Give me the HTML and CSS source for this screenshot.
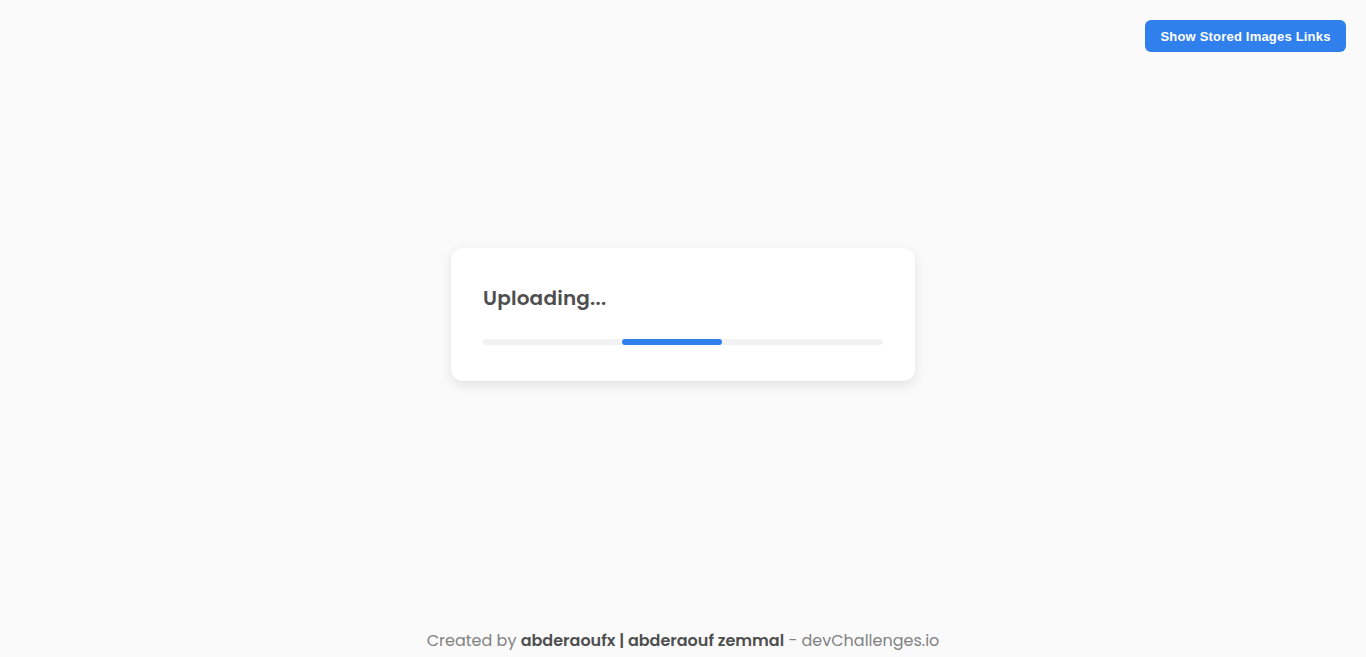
FILE: index.html
```html
<!DOCTYPE html>
<html lang="en">
<head>
<meta charset="utf-8">
<title>Image Uploader</title>
<link rel="stylesheet" href="styles.css">
</head>
<body>
<header class="topbar">
  <button class="links-btn" type="button">Show Stored Images Links</button>
</header>
<main class="main">
  <section class="card">
    <h1 class="card-title">Uploading...</h1>
    <div class="track"><div class="bar"></div></div>
  </section>
</main>
<footer class="footer">
  <p class="credit">Created by <strong>abderaoufx | abderaouf zemmal</strong> - devChallenges.io</p>
</footer>
</body>
</html>
```

FILE: styles.css
```css
* { box-sizing: border-box; }
html, body { height: 100%; }
body {
  margin: 0;
  background: #fafafa;
  font-family: "Poppins", "Open Sans", "Noto Sans", sans-serif;
  display: flex;
  flex-direction: column;
  min-height: 100vh;
}
.topbar {
  display: flex;
  justify-content: flex-end;
  padding: 20px 20px 0;
  height: 52px;
}
.links-btn {
  height: 32px;
  width: 201px;
  border: none;
  border-radius: 6px;
  background: #2f80ed;
  color: #fff;
  font-family: "Liberation Sans", Arial, sans-serif;
  font-weight: 700;
  font-size: 13px;
  letter-spacing: 0.2px;
  padding: 0;
  cursor: pointer;
}
.main {
  flex: 1;
  display: flex;
  align-items: center;
  justify-content: center;
}
.card {
  width: 464px;
  height: 133px;
  background: #fff;
  border-radius: 12px;
  box-shadow: 0 4px 12px rgba(0, 0, 0, 0.1);
  padding: 36px 32px 0;
}
.card-title {
  margin: 0;
  font-size: 20px;
  line-height: 28px;
  font-weight: 600;
  letter-spacing: 0.2px;
  color: #4f4f4f;
}
.track {
  margin-top: 27px;
  width: 400px;
  height: 6px;
  border-radius: 8px;
  background: #f2f2f2;
  display: flex;
  padding-left: 139px;
}
.bar {
  width: 100px;
  height: 6px;
  border-radius: 8px;
  background: #2f80ed;
}
.footer {
  height: 80px;
  display: flex;
  align-items: flex-end;
  justify-content: center;
}
.credit {
  margin: 0 0 4px;
  font-size: 16px;
  line-height: 24px;
  color: #828282;
  font-weight: 400;
}
.credit strong {
  color: #4f4f4f;
  font-weight: 600;
}
```
